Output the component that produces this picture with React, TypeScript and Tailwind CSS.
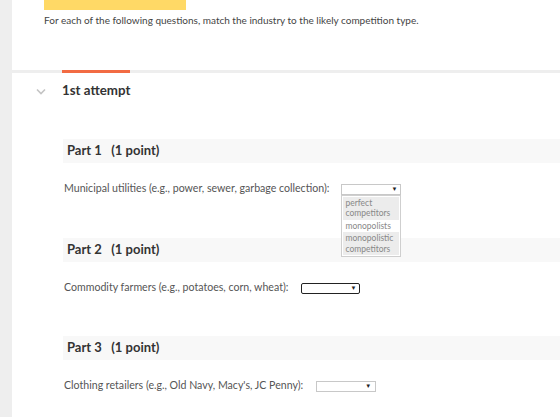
import React from "react";

const font = { fontFamily: "Lato, 'Open Sans', sans-serif" };

function Part({ n, label, select }: { n: number; label: string; select: React.ReactNode }) {
  return (
    <div className="flex flex-col">
      <div className="ml-[51px] h-[24px] bg-[#f8f8f8] flex items-center pl-[4px]">
        <span className="text-[13px] font-bold text-[#333] whitespace-pre">{`Part ${n}   (1 point)`}</span>
      </div>
      <div className="ml-[52px] mt-[20px] flex items-center h-[12px]">
        <span className="text-[10.6px] text-[#555] whitespace-nowrap">{label}</span>
        {select}
      </div>
    </div>
  );
}

export default function App() {
  return (
    <div className="w-[560px] h-[417px] bg-[#eeeeee] flex overflow-hidden" style={font}>
      <div className="w-[12px] shrink-0" />
      <div className="flex-1 flex flex-col">
        <div className="bg-white h-[70px] flex flex-col">
          <div className="ml-[32px] w-[142px] h-[10px] bg-[#ffd966]" />
          <div className="ml-[32px] mt-[4px] text-[10px] text-[#444] leading-[12px] whitespace-nowrap">
            For each of the following questions, match the industry to the likely competition type.
          </div>
        </div>
        <div className="h-[3px] bg-[#eeeeee] flex">
          <div className="ml-[50px] w-[68px] h-[3px] bg-[#f26b43]" />
        </div>
        <div className="bg-white flex-1 flex flex-col">
          <div className="mt-[10px] h-[16px] flex items-center">
            <svg className="ml-[24px]" width="10" height="7" viewBox="0 0 10 7">
              <path d="M1 1.5 L5 5.5 L9 1.5" fill="none" stroke="#c4c4c4" strokeWidth="1.6" />
            </svg>
            <span className="ml-[16px] text-[13.3px] font-bold text-[#333]">1st attempt</span>
          </div>
          <div className="mt-[40px] flex flex-col">
            <Part
              n={1}
              label="Municipal utilities (e.g., power, sewer, garbage collection):"
              select={
                <div className="relative ml-[12px] w-[60px] h-[11px] border border-[#c8c8c8] bg-white flex items-center justify-end pr-[3px]">
                  <span className="text-[6px] text-[#222] leading-none">▼</span>
                  <div className="absolute left-[-1px] top-[10px] w-[60px] border border-[#cfcfcf] bg-white flex flex-col p-[1px] text-[8.5px] leading-[10.5px] text-[#888]">
                    <div className="bg-[#ececec] px-[2px] py-[1px]">perfect<br />competitors</div>
                    <div className="px-[2px] py-[1px]">monopolists</div>
                    <div className="bg-[#ececec] px-[2px] py-[1px]">monopolistic<br />competitors</div>
                  </div>
                </div>
              }
            />
          </div>
          <div className="mt-[43px]">
            <Part
              n={2}
              label="Commodity farmers (e.g., potatoes, corn, wheat):"
              select={
                <div className="ml-[13px] w-[59px] h-[11px] border border-[#222] rounded-[2px] bg-white flex items-center justify-end pr-[3px]">
                  <span className="text-[6px] text-[#222] leading-none">▼</span>
                </div>
              }
            />
          </div>
          <div className="mt-[42px]">
            <Part
              n={3}
              label="Clothing retailers (e.g., Old Navy, Macy's, JC Penny):"
              select={
                <div className="ml-[13px] w-[60px] h-[11px] border border-[#c8c8c8] bg-white flex items-center justify-end pr-[4px]">
                  <span className="text-[6px] text-[#222] leading-none">▼</span>
                </div>
              }
            />
          </div>
        </div>
      </div>
    </div>
  );
}
